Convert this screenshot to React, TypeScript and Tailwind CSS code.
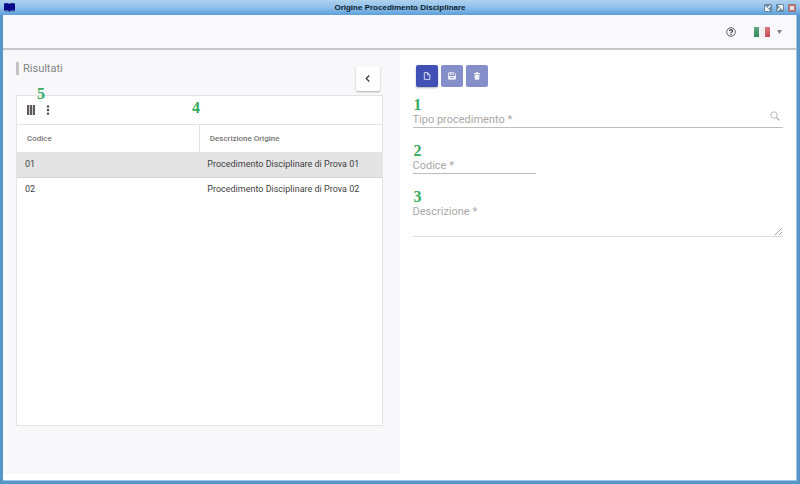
import React, { useState } from 'react';

interface Origine {
  codice: string;
  descrizione: string;
}

const rows: Origine[] = [
  { codice: '01', descrizione: 'Procedimento Disciplinare di Prova 01' },
  { codice: '02', descrizione: 'Procedimento Disciplinare di Prova 02' },
];

function Marker({ n, className }: { n: number; className: string }) {
  return (
    <span className={`absolute font-['Liberation_Serif',serif] text-[16px] leading-4 font-bold text-[#35ad5c] ${className}`}>
      {n}
    </span>
  );
}

function TitleBar() {
  return (
    <header className="grid h-[15px] grid-cols-[1fr_auto_1fr] items-center bg-linear-to-b from-[#b0d2ee] via-[#8fc0ea] to-[#5b9fd9] px-1">
      <svg className="h-[9px] w-[11px]" viewBox="0 0 11 9">
        <path d="M0 0.6 L3 0 L5.5 0.8 L8 0 L11 0.6 V7.6 H7 L5.5 8.6 L4 7.6 H0 Z" fill="#08088a" />
        <path d="M0.5 8 H4 L5.5 8.8 L7 8 H10.5" stroke="#4a4a8a" strokeWidth="0.7" fill="none" />
      </svg>
      <h1 className="font-['Liberation_Sans',sans-serif] text-[8px] leading-[15px] font-bold text-[#0c1c2c]">
        Origine Procedimento Disciplinare
      </h1>
      <div className="flex justify-end gap-1">
        <button aria-label="Riduci" className="h-2 w-2">
          <svg viewBox="0 0 8 8" className="h-2 w-2">
            <rect width="8" height="8" rx="1" fill="#6a879f" />
            <path d="M6.5 1.5 L2.5 5.5 M1.8 2.2 V6.2 H5.8" stroke="#fff" strokeWidth="1.4" fill="none" />
          </svg>
        </button>
        <button aria-label="Ingrandisci" className="h-2 w-2">
          <svg viewBox="0 0 8 8" className="h-2 w-2">
            <rect width="8" height="8" rx="1" fill="#6a879f" />
            <path d="M1.5 6.5 L5.5 2.5 M2.2 1.8 H6.2 V5.8" stroke="#fff" strokeWidth="1.4" fill="none" />
          </svg>
        </button>
        <button aria-label="Chiudi" className="h-2 w-2">
          <svg viewBox="0 0 8 8" className="h-2 w-2">
            <rect width="8" height="8" rx="1" fill="#a8706f" />
            <path d="M2 2 L6 6 M6 2 L2 6" stroke="#fff" strokeWidth="1.5" />
          </svg>
        </button>
      </div>
    </header>
  );
}

function Toolbar() {
  return (
    <nav className="flex h-[35px] items-center justify-end border-b-2 border-[#c6c6c8] bg-[#f8f8fd] pr-[14px]">
      <button aria-label="Aiuto" className="mr-[18px]">
        <svg viewBox="0 0 10 10" className="h-[10px] w-[10px]" fill="none" stroke="#3c3c3c">
          <circle cx="5" cy="5" r="4.3" strokeWidth="0.8" />
          <path d="M3.5 4 C3.5 2.1 6.5 2.1 6.5 4 C6.5 5 5 5 5 6.2 M5 6.9 V7.9" strokeWidth="1.2" />
        </svg>
      </button>
      <button aria-label="Lingua: italiano" className="flex items-center gap-[7px]">
        <svg viewBox="0 0 16 10" className="h-[10px] w-4">
          <defs>
            <linearGradient id="green" x2="0" y2="1">
              <stop offset="0" stopColor="#62a983" />
              <stop offset="1" stopColor="#2f8a5a" />
            </linearGradient>
            <linearGradient id="red" x2="0" y2="1">
              <stop offset="0" stopColor="#dc7a80" />
              <stop offset="1" stopColor="#c64a55" />
            </linearGradient>
          </defs>
          <rect width="5" height="10" fill="url(#green)" />
          <rect x="5" width="6" height="10" fill="#f1f1f2" />
          <rect x="11" width="5" height="10" fill="url(#red)" />
        </svg>
        <svg viewBox="0 0 5 4" className="h-1 w-[5px]">
          <path d="M0 0 H5 L2.5 4 Z" fill="#808080" />
        </svg>
      </button>
    </nav>
  );
}

function ResultsPanel() {
  const [selected, setSelected] = useState('01');

  return (
    <section className="flex flex-col bg-[#f8f8fb] pr-[17px] pb-12 pl-[13px]">
      <div className="flex h-[45px] justify-between pt-3 pr-[3px]">
        <h2 className="h-[13px] border-l-[3px] border-[#c4c4c4] pl-1 text-[11px] leading-[13px] text-[#828282]">Risultati</h2>
        <button
          aria-label="Comprimi"
          className="mt-1 flex h-[25px] w-6 items-center justify-center rounded-xs bg-white shadow-[0_1px_2px_rgba(0,0,0,0.3)]"
        >
          <svg viewBox="0 0 4 6" className="h-[7px] w-[5px]">
            <path d="M3.5 0.4 L0.9 3 L3.5 5.6" fill="none" stroke="#333" strokeWidth="1" />
          </svg>
        </button>
      </div>

      <div className="relative flex-1 border border-[#e4e4e6] bg-white">
        <Marker n={5} className="top-[-10px] left-5" />
        <Marker n={4} className="top-1 left-[175px]" />
        <div className="flex h-[29px] items-center gap-[11px] border-b border-[#e6e3e6] pl-[10px]">
          <button aria-label="Colonne">
            <svg viewBox="0 0 8 10" className="h-[10px] w-2" fill="#5f585c">
              <rect width="2.2" height="10" />
              <rect x="2.9" width="2.2" height="10" />
              <rect x="5.8" width="2.2" height="10" />
            </svg>
          </button>
          <button aria-label="Altre azioni">
            <svg viewBox="0 0 4 10" className="h-[10px] w-1" fill="#4a4448">
              <circle cx="2" cy="1.4" r="1.2" />
              <circle cx="2" cy="5" r="1.2" />
              <circle cx="2" cy="8.6" r="1.2" />
            </svg>
          </button>
        </div>
        <table className="w-full table-fixed border-collapse text-left text-[9px]">
          <thead>
            <tr className="h-[27px] text-[8px] text-[#757575]">
              <th className="w-1/2 border-r border-[#e6e0e4] pl-[10px] font-medium">Codice</th>
              <th className="w-1/2 pl-[10px] font-medium">Descrizione Origine</th>
            </tr>
          </thead>
          <tbody>
            {rows.map((row) => (
              <tr
                key={row.codice}
                onClick={() => setSelected(row.codice)}
                className={`h-[25px] text-[#3f3f3f] ${selected === row.codice ? 'border-b border-[#d4d4d4] bg-[#e4e4e4]' : ''}`}
              >
                <td className="pl-2">{row.codice}</td>
                <td className="pl-2">{row.descrizione}</td>
              </tr>
            ))}
          </tbody>
        </table>
      </div>
    </section>
  );
}

function DetailForm() {
  return (
    <form className="px-[13px] pt-[15px] text-[11px] leading-3 text-[#a9a9a9]">
      <div className="flex gap-[3px] pl-[3px]">
        <button type="button" aria-label="Nuovo" className="flex h-[22px] w-[22px] items-center justify-center rounded-xs bg-[#3f51b5] shadow-[0_1px_2px_rgba(0,0,0,0.3)]">
          <svg viewBox="0 0 8 8" className="h-2 w-2" fill="none" stroke="#e4e7f6" strokeWidth="0.9">
            <path d="M1.3 0.6 H4.7 L6.9 2.8 V7.4 H1.3 Z M4.5 0.8 V3 H6.7" />
          </svg>
        </button>
        <button type="button" aria-label="Salva" className="flex h-[22px] w-[22px] items-center justify-center rounded-xs bg-[#858fc9]">
          <svg viewBox="0 0 8 8" className="h-2 w-2" fill="none" stroke="#f2f3fa" strokeWidth="0.9">
            <path d="M0.6 0.8 H6 L7.4 2.2 V7.2 H0.6 Z" />
            <path d="M0.8 4 H7.2 V7 H0.8 Z M2 1 H3.2 V3 H2 Z" fill="#f2f3fa" stroke="none" />
            <path d="M2.2 5.6 H5.8" stroke="#858fc9" />
            <path d="M5 1 V3" />
          </svg>
        </button>
        <button type="button" aria-label="Elimina" className="flex h-[22px] w-[22px] items-center justify-center rounded-xs bg-[#858fc9]">
          <svg viewBox="0 0 8 8" className="h-2 w-2" fill="#f2f3fa">
            <path d="M3 0.2 H5 L5.4 1 H7 V2 H1 V1 H2.6 Z M1.5 2.4 H6.5 L6.2 7.8 H1.8 Z" />
          </svg>
        </button>
      </div>

      <div className="relative mt-[22px] flex border-b border-[#bdbdbd]">
        <Marker n={1} className="top-[-12px] left-px" />
        <label htmlFor="tipo" className="absolute top-[5px] left-0">Tipo procedimento *</label>
        <input id="tipo" required className="h-[18px] min-w-0 flex-1 text-[#3f3f3f] outline-none" />
        <button type="button" aria-label="Cerca" className="mr-[3px] pb-1">
          <svg viewBox="0 0 10 10" className="h-[10px] w-[10px]" fill="none" stroke="#a8a8a8">
            <circle cx="4" cy="4" r="3.2" strokeWidth="0.8" />
            <path d="M6.4 6.4 L9.4 9.4" strokeWidth="1.3" />
          </svg>
        </button>
      </div>

      <div className="relative mt-[27px] w-1/3 border-b border-[#bdbdbd]">
        <Marker n={2} className="top-[-12px] left-px" />
        <label htmlFor="codice" className="absolute top-[5px] left-0">Codice *</label>
        <input id="codice" required className="block h-[18px] w-full text-[#3f3f3f] outline-none" />
      </div>

      <div className="relative mt-[27px]">
        <Marker n={3} className="top-[-12px] left-px" />
        <label htmlFor="descrizione" className="absolute top-[5px] left-0">Descrizione *</label>
        <textarea
          id="descrizione"
          required
          className="block h-9 w-full resize-y border-b border-[#c8c8c8] text-[#3f3f3f] opacity-60 outline-none"
        />
      </div>
    </form>
  );
}

export default function App() {
  return (
    <div className="flex min-h-screen flex-col bg-[#5595c8] font-[Roboto,sans-serif]">
      <TitleBar />
      <div className="mr-[3px] mb-[3px] ml-[3px] flex flex-1 flex-col border-r border-b border-[#9cc8e8] bg-white">
        <Toolbar />
        <main className="mb-[6px] grid flex-1 grid-cols-2">
          <ResultsPanel />
          <DetailForm />
        </main>
      </div>
    </div>
  );
}
